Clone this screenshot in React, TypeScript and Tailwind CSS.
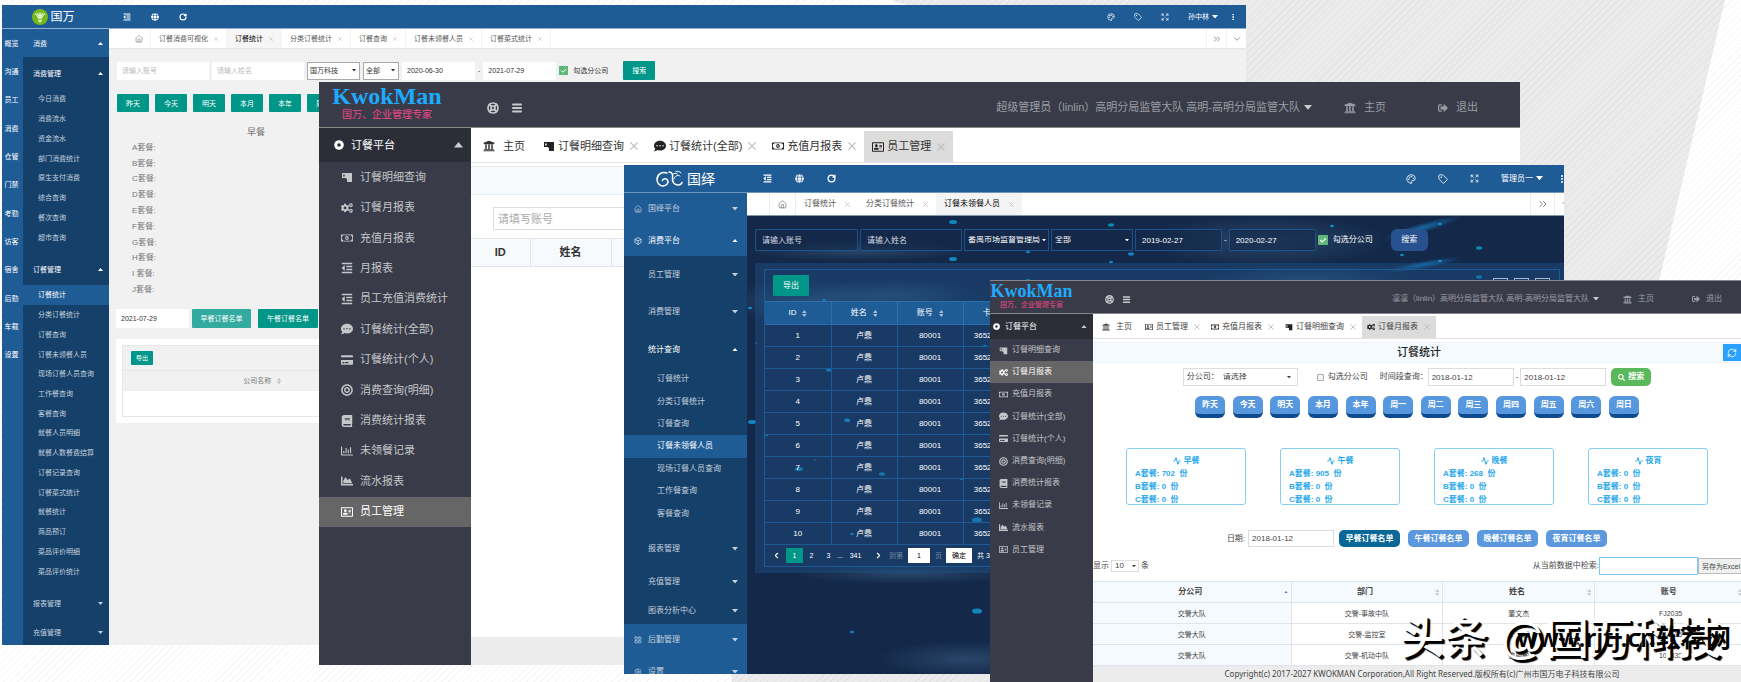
import type { ReactNode } from "react";
import {
  FaBook,
  FaBullseye,
  FaChartArea,
  FaCogs,
  FaCommentDots,
  FaCreditCard,
  FaGlobe,
  FaOutdent,
  FaRegAddressCard,
  FaRegChartBar,
  FaRegMoneyBillAlt,
  FaSearch,
  FaSignOutAlt,
  FaUniversity,
} from "react-icons/fa";
import {
  Activity,
  Box,
  ChevronDown,
  ChevronLeft,
  ChevronRight,
  ChevronsRight,
  Expand,
  House,
  LayoutGrid,
  LifeBuoy,
  Menu,
  MoreVertical,
  Palette,
  RefreshCw,
  RotateCw,
  Settings,
  Tag,
} from "lucide-react";

const railItems = ["概览", "沟通", "员工", "消费", "仓管", "门禁", "考勤", "访客", "宿舍", "后勤", "车载", "设置"];

const spendItems = [
  "今日消费",
  "消费流水",
  "资金流水",
  "部门消费统计",
  "原生支付消费",
  "综合查询",
  "餐次查询",
  "超市查询",
];

const orderItems = [
  "订餐统计",
  "分类订餐统计",
  "订餐查询",
  "订餐未领餐人员",
  "现场订餐人员查询",
  "工作餐查询",
  "客餐查询",
  "就餐人员明细",
  "就餐人数餐费结算",
  "订餐记录查询",
  "订餐菜式统计",
  "就餐统计",
  "商品预订",
  "菜品评价明细",
  "菜品评价统计",
];

const statItems = [
  "订餐统计",
  "分类订餐统计",
  "订餐查询",
  "订餐未领餐人员",
  "现场订餐人员查询",
  "工作餐查询",
  "客餐查询",
];

// ── Shared pieces ────────────────────────────────────────────

function Caret({ up = false, className = "" }: { up?: boolean; className?: string }) {
  return (
    <svg viewBox="0 0 10 6" className={`shrink-0 fill-current ${className}`} aria-hidden="true">
      <path d={up ? "M0 6h10L5 0z" : "M0 0h10L5 6z"} />
    </svg>
  );
}

function Cross({ className }: { className: string }) {
  return (
    <svg viewBox="0 0 10 10" className={`stroke-current ${className}`} strokeWidth={1.4} aria-hidden="true">
      <path d="M0.5 0.5l9 9M9.5 0.5l-9 9" />
    </svg>
  );
}

function SortIcon({ className = "" }: { className?: string }) {
  return (
    <svg viewBox="0 0 8 12" className={`shrink-0 fill-current ${className}`} aria-hidden="true">
      <path d="M0 5h8L4 0zM0 7h8l-4 5z" />
    </svg>
  );
}

function TicketIcon({ className = "" }: { className?: string }) {
  return (
    <svg viewBox="0 0 12 12" className={`shrink-0 ${className}`} aria-hidden="true">
      <path
        fill="currentColor"
        fillRule="evenodd"
        d="M1 2h10v9H6V8L4.500 7H1zM2.200 3.400v2.200h1.500V3.400z"
      />
    </svg>
  );
}

function DotIcon({ className = "" }: { className?: string }) {
  return (
    <svg viewBox="0 0 10 10" className={`shrink-0 ${className}`} aria-hidden="true">
      <circle cx="5" cy="5" r="3.3" fill="none" stroke="#fff" strokeWidth="3" />
    </svg>
  );
}

interface SelectProps {
  label: string;
  options: string[];
  className: string;
  caret?: string;
}

function Select({ label, options, className, caret = "right-1 w-[4px]" }: SelectProps) {
  return (
    <span className="relative flex items-center">
      <select aria-label={label} className={`appearance-none rounded-none outline-none ${className}`}>
        {options.map((o) => (
          <option key={o}>{o}</option>
        ))}
      </select>
      <Caret className={`pointer-events-none absolute ${caret}`} />
    </span>
  );
}

const kwokItems: { icon: ReactNode; text: string }[] = [
  { icon: <TicketIcon className="size-full" />, text: "订餐明细查询" },
  { icon: <FaCogs className="size-full" />, text: "订餐月报表" },
  { icon: <FaRegMoneyBillAlt className="size-full" />, text: "充值月报表" },
  { icon: <FaOutdent className="size-full" />, text: "月报表" },
  { icon: <FaOutdent className="size-full" />, text: "员工充值消费统计" },
  { icon: <FaCommentDots className="size-full" />, text: "订餐统计(全部)" },
  { icon: <FaCreditCard className="size-full" />, text: "订餐统计(个人)" },
  { icon: <FaBullseye className="size-full" />, text: "消费查询(明细)" },
  { icon: <FaBook className="size-full" />, text: "消费统计报表" },
  { icon: <FaRegChartBar className="size-full" />, text: "未领餐记录" },
  { icon: <FaChartArea className="size-full" />, text: "流水报表" },
  { icon: <FaRegAddressCard className="size-full" />, text: "员工管理" },
];

// ── Window 1 ────────────────────────────────────────────

function PlainTab({ text, active = false }: { text: string; active?: boolean }) {
  return (
    <div
      className={`flex items-center gap-[6px] border-r border-[#f2f2f2] px-2 ${
        active ? "bg-[#f6f6f6] text-black" : "text-[#555]"
      }`}
    >
      <a href="#">{text}</a>
      <button aria-label={`关闭${text}`} className="text-[#bbb]">
        <Cross className="size-[4px]" />
      </button>
    </div>
  );
}

function SubItem({ text, active = false, className }: { text: string; active?: boolean; className: string }) {
  return (
    <a
      href="#"
      className={`flex items-center ${className} ${active ? "bg-[#1f5c96] text-white" : "text-[#c3d0dc]"}`}
    >
      {text}
    </a>
  );
}

function TealButton({ text, className = "h-[18px] w-8" }: { text: string; className?: string }) {
  return <button className={`rounded-[1px] bg-[#009688] text-white ${className}`}>{text}</button>;
}

function OverviewWindow() {
  return (
    <section className="absolute top-[5px] right-[495px] bottom-[37px] left-[2px] flex flex-col overflow-hidden bg-[#f1f1f1] text-[7px] text-[#333]">
      <header className="flex h-6 shrink-0 items-center border-b border-[#8fb0d0] bg-[#1f5c96] text-white">
        <div className="flex w-[107px] items-center justify-center gap-[2px] pr-1 text-[12px]">
          <svg viewBox="0 0 30 30" className="size-4" aria-hidden="true">
            <circle cx="15" cy="15" r="15" fill="#76b81b" />
            <path d="M10 10h10l-2.500 8h-5z" fill="#cfe8a6" />
            <path
              d="M5 9c3 1 6 4 7 9M25 9c-3 1-6 4-7 9M15 6v12M9 7l3 5M21 7l-3 5"
              fill="none"
              stroke="#fff"
              strokeWidth="1.8"
            />
            <path d="M11.500 21h7M12.500 24h5" stroke="#fff" strokeWidth="1.8" />
          </svg>
          <span>国万</span>
        </div>
        <div className="flex flex-1 items-center gap-[20px] pl-[14px]">
          <FaOutdent className="size-2" />
          <FaGlobe className="size-2" />
          <RotateCw className="size-2" strokeWidth={3.5} />
        </div>
        <div className="flex items-center gap-[19px] pr-[9px]">
          <Palette className="size-2" />
          <Tag className="size-2" />
          <Expand className="size-2" />
          <span className="-mr-2 flex items-center gap-[3px]">
            孙中林
            <Caret className="w-[6px]" />
          </span>
          <MoreVertical className="size-2" strokeWidth={3} />
        </div>
      </header>

      <div className="flex min-h-0 flex-1">
        <nav className="w-[21px] shrink-0 bg-[#1f5c96] text-white">
          <div className="grid h-[340px] grid-rows-12">
            {railItems.map((t) => (
              <a key={t} href="#" className="flex items-center justify-center pr-[2px]">
                {t}
              </a>
            ))}
          </div>
        </nav>
        <nav className="w-[86px] shrink-0 overflow-hidden bg-[#15406a] text-white">
          <div className="flex h-7 items-center justify-between bg-[#1f5c96] pr-[6px] pl-[10px]">
            消费
            <Caret up className="w-[5px]" />
          </div>
          <div className="flex h-8 items-center justify-between pr-[6px] pl-[10px]">
            消费管理
            <Caret up className="w-[5px]" />
          </div>
          <div className="grid h-[158px] grid-rows-8">
            {spendItems.map((t) => (
              <SubItem key={t} text={t} className="pl-[15px]" />
            ))}
          </div>
          <div className="mt-[6px] flex h-8 items-center justify-between pr-[6px] pl-[10px]">
            订餐管理
            <Caret up className="w-[5px]" />
          </div>
          <div className="grid h-[296px]">
            {orderItems.map((t, i) => (
              <SubItem key={t} text={t} active={i === 0} className="pl-[15px]" />
            ))}
          </div>
          <div className="mt-[6px] flex h-8 items-center justify-between pr-[6px] pl-[10px] text-[#c3d0dc]">
            报表管理
            <Caret className="w-[5px]" />
          </div>
          <div className="flex h-[26px] items-center justify-between pr-[6px] pl-[10px] text-[#c3d0dc]">
            充值管理
            <Caret className="w-[5px]" />
          </div>
        </nav>

        <main className="min-w-0 flex-1">
          <div className="flex h-5 border-b border-[#e6e6e6] bg-white">
            <a href="#" aria-label="首页" className="flex w-[42px] items-center justify-end border-r border-[#f2f2f2] pr-[7px] text-[#666]">
              <House className="size-[8px]" strokeWidth={1.5} />
            </a>
            <PlainTab text="订餐消费可视化" />
            <PlainTab text="订餐统计" active />
            <PlainTab text="分类订餐统计" />
            <PlainTab text="订餐查询" />
            <PlainTab text="订餐未领餐人员" />
            <PlainTab text="订餐菜式统计" />
            <div className="ml-auto flex text-[#555]">
              <button aria-label="更多标签" className="w-5 border-l border-[#f2f2f2] pl-[5px]">
                <ChevronsRight className="size-[10px]" strokeWidth={1.5} />
              </button>
              <button aria-label="标签操作" className="w-5 border-l border-[#f2f2f2] pl-[5px]">
                <ChevronDown className="size-[10px]" strokeWidth={1.5} />
              </button>
            </div>
          </div>

          <div className="flex items-center gap-[3px] px-2 pt-3">
            <input aria-label="账号" placeholder="请输入账号" className="h-[18px] w-[92px] bg-white px-[5px] placeholder:text-[#bbb]" />
            <input aria-label="姓名" placeholder="请输入姓名" className="h-[18px] w-[92px] bg-white px-[5px] placeholder:text-[#bbb]" />
            <Select label="公司" options={["国万科技"]} className="h-[18px] w-[53px] border border-[#aaa] bg-white pl-[2px]" />
            <Select label="部门" options={["全部"]} className="h-[18px] w-9 border border-[#aaa] bg-white pl-[2px]" />
            <input aria-label="开始日期" defaultValue="2020-06-30" className="h-[18px] w-[73px] bg-white px-[5px]" />
            <span>-</span>
            <input aria-label="结束日期" defaultValue="2021-07-29" className="h-[18px] w-[73px] bg-white px-[5px]" />
            <label className="flex items-center gap-[5px]">
              <input type="checkbox" defaultChecked className="peer sr-only" />
              <span className="grid size-[9px] place-items-center bg-[#5fb878]">
                <svg viewBox="0 0 10 10" className="size-[7px] fill-none stroke-white" strokeWidth={1.4}>
                  <path d="M1.5 5l2.5 2.5L8.5 3" />
                </svg>
              </span>
              勾选分公司
            </label>
            <TealButton text="搜索" className="ml-3 h-[19px] w-8" />
          </div>

          <div className="flex gap-[6px] px-2 pt-[14px]">
            {["昨天", "今天", "明天", "本月", "本年", "周一"].map((t) => (
              <TealButton key={t} text={t} />
            ))}
          </div>

          <div className="w-[294px] pt-4 text-[8px] text-[#777]">
            <h2 className="text-center text-[9px]">早餐</h2>
            <ul className="mt-[3px] grid h-[158px] pl-[23px]">
              {["A", "B", "C", "D", "E", "F", "G", "H", "I ", "J"].map((t) => (
                <li key={t} className="flex items-center">
                  {t}套餐:
                </li>
              ))}
            </ul>
          </div>

          <div className="flex gap-[3px] px-[7px] pt-[11px]">
            <input aria-label="日期" defaultValue="2021-07-29" className="h-[19px] w-[73px] bg-white px-[5px]" />
            <button className="h-[19px] w-[59px] rounded-[1px] bg-[#33aa9f] text-white">早餐订餐名单</button>
            <TealButton text="午餐订餐名单" className="ml-1 h-[19px] w-[60px]" />
          </div>

          <div className="mt-[11px] ml-[7px] bg-white p-[6px]">
            <div className="flex h-[25px] items-center border border-b-0 border-[#e6e6e6] bg-[#f1f1f1] pl-2">
              <TealButton text="导出" className="h-[14px] w-[22px] text-[6px]" />
            </div>
            <table className="w-full table-fixed border-collapse border border-[#e6e6e6] text-[#777]">
              <thead>
                <tr className="h-5 bg-[#f1f1f1]">
                  <th className="w-[279px] border-t border-[#e6e6e6] font-normal">
                    <span className="inline-flex items-center gap-[6px]">
                      公司名称
                      <SortIcon className="h-[6px] text-[#bbb]" />
                    </span>
                  </th>
                  <th className="border-t border-[#e6e6e6]" />
                </tr>
              </thead>
              <tbody>
                <tr className="h-[26px]">
                  <td />
                  <td />
                </tr>
              </tbody>
            </table>
          </div>
        </main>
      </div>
    </section>
  );
}

// ── Window 2 ────────────────────────────────────────────

function KwokTab({ icon, text, active = false }: { icon: ReactNode; text: string; active?: boolean }) {
  return (
    <div className={`flex items-center gap-[3px] px-2 ${active ? "mt-[3px] bg-[#dcdcdc]" : "pt-[2px]"}`}>
      <span className="size-3 text-[#222]">{icon}</span>
      <a href="#">{text}</a>
      <button aria-label={`关闭${text}`} className="ml-[3px] text-[#bbb]">
        <Cross className="size-2" />
      </button>
    </div>
  );
}

function StaffWindow() {
  return (
    <section className="absolute top-[82px] right-[221px] bottom-[17px] left-[319px] flex flex-col overflow-hidden bg-white text-[11px] text-[#333]">
      <header className="flex h-[46px] shrink-0 items-center border-b border-[#8a8a8a] bg-[#393c48] text-[#9b9da4]">
        <div className="flex w-[152px] flex-col items-center self-start pr-4">
          <span className="font-[family-name:'Liberation_Serif',serif] text-[24px] leading-7 font-bold text-[#1eaaff]">
            KwokMan
          </span>
          <span className="text-[10px] font-medium text-[#d6457c]">国万、企业管理专家</span>
        </div>
        <div className="flex flex-1 items-center gap-3 pt-[6px] pl-4 text-[#c9cacd]">
          <LifeBuoy className="size-3" strokeWidth={3.4} />
          <Menu className="size-3" strokeWidth={4} />
        </div>
        <div className="flex items-center pt-[6px] pr-[42px]">
          <span>超级管理员（linlin）高明分局监管大队 高明-高明分局监管大队</span>
          <Caret className="ml-1 w-2 text-[#ccc]" />
          <FaUniversity className="ml-[32px] size-3" />
          <a href="#" className="ml-2">
            主页
          </a>
          <FaSignOutAlt className="ml-[52px] size-[10px]" />
          <a href="#" className="ml-2">
            退出
          </a>
        </div>
      </header>

      <div className="flex min-h-0 flex-1">
        <nav className="w-[152px] shrink-0 bg-[#393c48] text-[#c5c6ca]">
          <div className="flex h-[34px] items-center bg-[#2b2e37] pr-2 pl-[15px] text-white">
            <DotIcon className="size-[10px]" />
            <span className="ml-[7px] flex-1">订餐平台</span>
            <Caret up className="w-[9px] text-[#ccc]" />
          </div>
          <div className="grid h-[365px] grid-rows-12">
            {kwokItems.map(({ icon, text }) => (
              <a
                key={text}
                href="#"
                className={`flex items-center gap-[7px] pl-[22px] ${
                  text === "员工管理" ? "bg-[#666] text-white" : ""
                }`}
              >
                <span className="size-3">{icon}</span>
                {text}
              </a>
            ))}
          </div>
        </nav>
        <main className="flex min-w-0 flex-1 flex-col">
          <div className="flex h-[35px] shrink-0 border-b border-[#e4e4e4]">
            <a href="#" className="flex items-center gap-2 pt-[2px] pr-[10px] pl-3">
              <FaUniversity className="size-3" />
              主页
            </a>
            <KwokTab icon={<TicketIcon className="size-full" />} text="订餐明细查询" />
            <KwokTab icon={<FaCommentDots className="size-full" />} text="订餐统计(全部)" />
            <KwokTab icon={<FaRegMoneyBillAlt className="size-full" />} text="充值月报表" />
            <KwokTab icon={<FaRegAddressCard className="size-full" />} text="员工管理" active />
          </div>
          <div className="mt-[3px] h-[29px] shrink-0 border-y border-[#e8edf2] bg-[#f6fafd]" />
          <div className="shrink-0 pt-3 pl-[22px]">
            <input aria-label="账号" placeholder="请填写账号" className="h-[23px] w-[220px] border border-[#ddd] px-1 placeholder:text-[#aaa]" />
          </div>
          <table className="mt-2 w-full shrink-0 table-fixed border-collapse">
            <thead>
              <tr className="h-7 border-y border-[#e2e6ea] bg-[#f6fafd]">
                <th className="w-[59px]">ID</th>
                <th className="w-[81px] border-x border-[#e2e6ea]">姓名</th>
                <th />
              </tr>
            </thead>
          </table>
          <footer className="mt-auto h-7 bg-[#ececec]" />
        </main>
      </div>
    </section>
  );
}

// ── Window 3 ────────────────────────────────────────────

// x, y and horizontal radius of the glowing specks behind the panels
const specks = [
  [206, 28, 4], [206, 65, 4], [77, 106, 2], [3, 114, 2], [9, 149, 1], [82, 176, 3], [238, 152, 2],
  [100, 226, 3], [5, 228, 4], [101, 227, 2], [19, 241, 2], [68, 266, 1], [52, 275, 4], [135, 280, 3],
  [215, 285, 2], [230, 326, 5], [105, 340, 2], [230, 417, 5], [105, 438, 2], [364, 31, 3], [585, 32, 2],
  [693, 30, 2], [281, 58, 2], [384, 60, 3], [364, 68, 2], [732, 54, 3], [655, 61, 2], [693, 67, 2],
  [732, 83, 3], [281, 86, 2],
];

function Sky() {
  return (
    <svg className="absolute inset-0 size-full" aria-hidden="true">
      <defs>
        <radialGradient id="cloud">
          <stop offset="0" stopColor="#4d7ba3" stopOpacity="0.35" />
          <stop offset="1" stopColor="#4d7ba3" stopOpacity="0" />
        </radialGradient>
        <radialGradient id="beam">
          <stop offset="0" stopColor="#1b86cf" stopOpacity="0.7" />
          <stop offset="1" stopColor="#1b86cf" stopOpacity="0" />
        </radialGradient>
      </defs>
      <ellipse cx="110" cy="35" rx="110" ry="10" fill="url(#cloud)" />
      <ellipse cx="60" cy="85" rx="90" ry="22" fill="url(#cloud)" />
      <ellipse cx="150" cy="80" rx="90" ry="18" fill="url(#cloud)" />
      <ellipse cx="520" cy="25" rx="120" ry="26" fill="url(#cloud)" />
      <ellipse cx="560" cy="64" rx="110" ry="16" fill="url(#cloud)" />
      <ellipse cx="160" cy="358" rx="110" ry="10" fill="url(#cloud)" />
      <ellipse cx="220" cy="443" rx="90" ry="18" fill="url(#cloud)" />
      <ellipse cx="675" cy="12" rx="40" ry="5" fill="url(#beam)" transform="rotate(-16 675 12)" />
      <ellipse cx="675" cy="49" rx="40" ry="4" fill="url(#beam)" transform="rotate(-10 675 49)" />
      {specks.map(([x, y, r], i) => (
        <ellipse key={i} cx={x} cy={y - 22} rx={r} ry={r * 0.45 + 0.3} fill="#1295d4" opacity="0.85" />
      ))}
    </svg>
  );
}

function GroupRow({ text, up = false, icon, className }: { text: string; up?: boolean; icon?: ReactNode; className: string }) {
  return (
    <div className={`flex items-center pr-[9px] pl-[10px] ${up ? "text-white" : "text-[#c3d0dc]"} ${className}`}>
      <span className="mr-[6px] size-2">{icon}</span>
      <span className="flex-1">{text}</span>
      <Caret up={up} className="w-[6px]" />
    </div>
  );
}

function AbsenceWindow() {
  return (
    <section className="absolute top-[165px] right-[177px] bottom-2 left-[624px] flex flex-col overflow-hidden bg-[#14294a] text-[8px] text-white">
      <header className="flex h-[28px] shrink-0 items-center border-b border-[#6f96bb] bg-[#1f5c96]">
        <div className="flex w-[123px] items-center justify-center gap-1 text-[14px]">
          <svg viewBox="0 0 54 34" className="h-[17px] w-[27px] fill-none stroke-white" strokeWidth="3" strokeLinecap="round" aria-hidden="true">
            <path d="M22 6C12 2 2 9 2 19c0 8 6 13 12 13 8 0 12-7 9-12-3-4-9-3-10 1" />
            <path d="M26 4c6 0 8 5 7 11-1 9 3 15 11 15 4 0 7-2 8-5" />
            <path d="M48 12c-5-3-11 0-12 6M40 3c4-1 7 0 10 3M33 9c3-3 7-3 10-1" strokeWidth="2" />
          </svg>
          <span>国绎</span>
        </div>
        <div className="flex flex-1 items-center gap-[23px] pl-4">
          <FaOutdent className="size-[9px]" />
          <FaGlobe className="size-[9px]" />
          <RotateCw className="size-[9px]" strokeWidth={3.5} />
        </div>
        <div className="flex items-center gap-[22px]">
          <Palette className="size-[10px]" />
          <Tag className="size-[10px]" />
          <Expand className="size-[9px]" />
          <span className="flex items-center gap-[3px]">
            管理员一
            <Caret className="w-[7px]" />
          </span>
          <MoreVertical className="-mr-[3px] -ml-2 size-[10px]" strokeWidth={3} />
        </div>
      </header>

      <div className="flex min-h-0 flex-1">
        <nav className="w-[123px] shrink-0 overflow-hidden bg-[#1f5c96]">
          <GroupRow text="国绎平台" icon={<House className="size-2" />} className="h-8" />
          <GroupRow text="消费平台" icon={<Box className="size-2" />} up className="h-[31px]" />
          <div className="h-[368px] bg-[#15406a]">
            <GroupRow text="员工管理" className="h-[37px]" />
            <GroupRow text="消费管理" className="h-[38px]" />
            <GroupRow text="统计查询" up className="h-[37px]" />
            <div className="grid h-[157px] grid-rows-7">
              {statItems.map((t) => (
                <SubItem key={t} text={t} active={t === "订餐未领餐人员"} className="pl-[33px]" />
              ))}
            </div>
            <GroupRow text="报表管理" className="mt-[7px] h-[34px]" />
            <GroupRow text="充值管理" className="h-8" />
            <GroupRow text="图表分析中心" className="h-[26px]" />
          </div>
          <GroupRow text="后勤管理" icon={<LayoutGrid className="size-2" />} className="h-8" />
          <GroupRow text="设置" icon={<Settings className="size-2" />} className="h-[31px]" />
        </nav>

        <main className="flex min-w-0 flex-1 flex-col">
          <div className="flex h-[22px] shrink-0 bg-white text-[#555]">
            <a href="#" aria-label="首页" className="ml-[22px] flex w-[27px] items-center justify-center border-x border-[#eee]">
              <House className="size-[9px]" strokeWidth={1.5} />
            </a>
            {["订餐统计", "分类订餐统计", "订餐未领餐人员"].map((t, i) => (
              <div key={t} className={`flex items-center gap-[9px] px-2 ${i === 2 ? "bg-[#f4f4f4] text-black" : ""}`}>
                <a href="#">{t}</a>
                <button aria-label={`关闭${t}`} className="text-[#bbb]">
                  <Cross className="size-[5px]" />
                </button>
              </div>
            ))}
            <div className="-mr-[14px] ml-auto flex">
              <button aria-label="更多标签" className="w-6 border-l border-[#eee] pl-[6px]">
                <ChevronsRight className="size-3" strokeWidth={1.5} />
              </button>
              <button aria-label="标签操作" className="w-6 border-l border-[#eee] pl-[5px]">
                <ChevronDown className="size-3" strokeWidth={1.5} />
              </button>
            </div>
          </div>

          <div className="relative min-h-0 flex-1 border-t border-[#8397ad]">
            <Sky />
            <div className="relative flex items-center gap-[2px] px-2 pt-[13px]">
              <input aria-label="账号" placeholder="请输入账号" className="h-[22px] w-[103px] rounded-[1px] border border-[#1e5288] bg-[#14294a]/60 px-[6px] placeholder:text-[#d5dae2]" />
              <input aria-label="姓名" placeholder="请输入姓名" className="h-[22px] w-[102px] rounded-[1px] border border-[#1e5288] bg-[#14294a]/60 px-[6px] placeholder:text-[#d5dae2]" />
              <Select label="公司" options={["番禺市场监督管理局"]} className="h-[22px] w-[85px] border border-[#1e5288] bg-[#14294a] pl-[3px]" caret="right-[3px] w-[4px]" />
              <Select label="部门" options={["全部"]} className="h-[22px] w-[82px] border border-[#1e5288] bg-[#14294a] pl-[3px]" caret="right-1 w-[4px]" />
              <input aria-label="开始日期" defaultValue="2019-02-27" className="h-[22px] w-[87px] rounded-[1px] border border-[#1e5288] bg-[#14294a]/60 px-[6px]" />
              <span>-</span>
              <input aria-label="结束日期" defaultValue="2020-02-27" className="h-[22px] w-[87px] rounded-[1px] border border-[#1e5288] bg-[#14294a]/60 px-[6px]" />
              <label className="flex items-center gap-[5px]">
                <input type="checkbox" defaultChecked className="peer sr-only" />
                <span className="grid size-[10px] place-items-center bg-[#5fb878]">
                  <svg viewBox="0 0 10 10" className="size-2 fill-none stroke-white" strokeWidth={1.4}>
                    <path d="M1.5 5l2.5 2.5L8.5 3" />
                  </svg>
                </span>
                勾选分公司
              </label>
              <button className="ml-4 h-[22px] w-[37px] rounded-md bg-[#27528f]">搜索</button>
            </div>

            <div className="relative mt-3 ml-2 bg-[#1f5c96]/35 py-[6px] pr-1 pl-[9px]">
              <div className="border border-[#1e5a96]">
                <div className="flex h-[31px] items-center justify-between pr-[9px] pl-2">
                  <TealButton text="导出" className="h-[21px] w-9" />
                  <div className="flex gap-[6px]">
                    <button aria-label="筛选列" className="size-[15px] border border-[#a8b6c6]" />
                    <button aria-label="导出表格" className="size-[15px] border border-[#a8b6c6]" />
                    <button aria-label="打印" className="size-[15px] border border-[#a8b6c6]" />
                  </div>
                </div>
                <table className="w-full table-fixed border-collapse text-center">
                  <thead>
                    <tr className="h-[23px] bg-[#1f5c96]">
                      {["ID", "姓名", "账号", "卡号"].map((t) => (
                        <th key={t} className="w-[66px] border border-l-0 border-[#2a6fb0] font-normal">
                          <span className="inline-flex items-center gap-[6px]">
                            {t}
                            <SortIcon className="h-[7px] text-[#a9bdd2]" />
                          </span>
                        </th>
                      ))}
                      <th />
                    </tr>
                  </thead>
                  <tbody>
                    {Array.from({ length: 10 }, (_, i) => (
                      <tr key={i} className="h-[22px] border-b border-[#1e5a96]">
                        <td className="border-r border-[#1e5a96]">{i + 1}</td>
                        <td className="border-r border-[#1e5a96]">卢鼎</td>
                        <td className="border-r border-[#1e5a96]">80001</td>
                        <td className="border-r border-[#1e5a96]">3652100001</td>
                        <td />
                      </tr>
                    ))}
                  </tbody>
                </table>
                <div className="flex h-[21px] items-center pl-[7px] text-[7px]">
                  <button aria-label="上一页">
                    <ChevronLeft className="size-[9px]" strokeWidth={3} />
                  </button>
                  <button className="ml-[5px] h-[15px] w-[17px] bg-[#009688]">1</button>
                  <button className="w-[17px]">2</button>
                  <button className="w-[17px]">3</button>
                  <span className="w-2">...</span>
                  <button className="ml-1 w-[13px]">341</button>
                  <button aria-label="下一页" className="ml-3">
                    <ChevronRight className="size-[9px]" strokeWidth={3} />
                  </button>
                  <label className="ml-[6px] flex items-center gap-[5px] text-[#71879f]">
                    到第
                    <input defaultValue="1" className="h-[15px] w-[22px] bg-white text-center text-black" />
                    页
                  </label>
                  <button className="ml-1 h-[15px] w-[26px] bg-white text-black">确定</button>
                  <span className="ml-[5px]">共 3405 条</span>
                </div>
              </div>
            </div>
          </div>
        </main>
      </div>
    </section>
  );
}

// ── Window 4 ────────────────────────────────────────────

const meals = [
  { name: "早餐", a: 702 },
  { name: "午餐", a: 905 },
  { name: "晚餐", a: 268 },
  { name: "夜宵", a: 0 },
];

const rows = [
  ["交警大队", "交警-事故中队", "董文杰", "FJ2035"],
  ["交警大队", "交警-监控室", "李国强", "FJ2135"],
  ["交警大队", "交警-机动中队", "曾艳敏", "103835"],
];

function SmallTab({ icon, text, active = false }: { icon: ReactNode; text: string; active?: boolean }) {
  return (
    <div className={`flex items-center gap-[3px] pr-[6px] pl-[5px] ${active ? "mt-[2px] bg-[#dcdcdc]" : "pt-[2px]"}`}>
      <span className="size-2 text-[#222]">{icon}</span>
      <a href="#">{text}</a>
      <button aria-label={`关闭${text}`} className="ml-[3px] text-[#bbb]">
        <Cross className="size-[6px]" />
      </button>
    </div>
  );
}

function MonthlyWindow() {
  return (
    <section className="absolute top-[280px] right-0 bottom-0 left-[990px] flex flex-col overflow-hidden bg-white text-[8px] text-[#444]">
      <header className="flex h-[34px] shrink-0 items-center border-y border-[#85868b] bg-[#393c48] text-[#9b9da4]">
        <div className="flex w-[103px] flex-col items-center self-start pr-5">
          <span className="font-[family-name:'Liberation_Serif',serif] text-[18px] leading-5 font-bold text-[#1eaaff]">
            KwokMan
          </span>
          <span className="text-[7px] font-medium text-[#d6457c]">国万、企业管理专家</span>
        </div>
        <div className="flex flex-1 items-center gap-2 pt-1 pl-3 text-[#c9cacd]">
          <LifeBuoy className="size-[9px]" strokeWidth={3.4} />
          <Menu className="size-[9px]" strokeWidth={4} />
        </div>
        <div className="flex items-center pt-1 pr-[19px]">
          <span>凛凛（linlin）高明分局监管大队 高明-高明分局监管大队</span>
          <Caret className="ml-1 w-[6px] text-[#ccc]" />
          <FaUniversity className="ml-6 size-[9px]" />
          <a href="#" className="ml-[6px]">
            主页
          </a>
          <FaSignOutAlt className="ml-[38px] size-2" />
          <a href="#" className="ml-[6px]">
            退出
          </a>
        </div>
      </header>

      <div className="flex min-h-0 flex-1">
        <nav className="w-[103px] shrink-0 bg-[#393c48] text-[#c5c6ca]">
          <div className="flex h-[25px] items-center bg-[#2b2e37] pr-[6px] pl-[3px] text-white">
            <DotIcon className="size-[7px]" />
            <span className="ml-[5px] flex-1">订餐平台</span>
            <Caret up className="w-[6px] text-[#ccc]" />
          </div>
          <div className="grid h-[222px] grid-rows-10">
            {kwokItems
              .filter((_, i) => i !== 3 && i !== 4)
              .map(({ icon, text }) => (
                <a
                  key={text}
                  href="#"
                  className={`flex items-center gap-1 pl-[9px] ${
                    text === "订餐月报表" ? "bg-[#666] text-white" : ""
                  }`}
                >
                  <span className="size-[9px]">{icon}</span>
                  {text}
                </a>
              ))}
          </div>
        </nav>

        <main className="flex min-w-0 flex-1 flex-col">
          <div className="flex h-[25px] shrink-0 border-b border-[#e4e4e4]">
            <a href="#" className="flex items-center gap-[6px] pt-[2px] pr-2 pl-[9px]">
              <FaUniversity className="size-2" />
              主页
            </a>
            <SmallTab icon={<FaRegAddressCard className="size-full" />} text="员工管理" />
            <SmallTab icon={<FaRegMoneyBillAlt className="size-full" />} text="充值月报表" />
            <SmallTab icon={<TicketIcon className="size-full" />} text="订餐明细查询" />
            <SmallTab icon={<FaCogs className="size-full" />} text="订餐月报表" active />
          </div>
          <div className="mt-[3px] flex h-[21px] shrink-0 items-center border-y border-[#edf3f8] bg-[#f5faff]">
            <h1 className="flex-1 pl-[22px] text-center text-[11px] font-medium text-[#222]">订餐统计</h1>
            <button aria-label="刷新" className="grid h-[17px] w-[18px] place-items-center bg-[#2aa0ff] text-white">
              <RefreshCw className="size-[10px]" />
            </button>
          </div>

          <div className="flex shrink-0 items-center justify-center pt-[5px]">
            <label className="flex h-[18px] items-center border border-[#ddd] pl-[3px]">
              分公司：
              <Select label="分公司" options={["请选择"]} className="h-4 w-[78px] pl-[4px]" caret="right-[6px] w-[4px]" />
            </label>
            <label className="ml-[19px] flex items-center gap-1">
              <input type="checkbox" className="size-[7px] appearance-none rounded-[1px] border border-[#aaa] bg-[#f4f4f4]" />
              勾选分公司
            </label>
            <label className="ml-3 flex items-center">
              时间段查询：
              <input defaultValue="2018-01-12" className="h-[18px] w-[86px] border border-[#ddd] px-[3px]" />
            </label>
            <span className="px-[2px]">-</span>
            <input aria-label="结束日期" defaultValue="2018-01-12" className="h-[18px] w-[86px] border border-[#ddd] px-[3px]" />
            <button className="ml-[5px] flex h-[18px] w-10 items-center justify-center gap-[3px] rounded-[5px] bg-[#5cb85c] font-bold text-white">
              <FaSearch className="size-[7px]" />
              搜索
            </button>
          </div>

          <div className="flex w-[444px] shrink-0 justify-between self-center pt-[10px]">
            {["昨天", "今天", "明天", "本月", "本年", "周一", "周二", "周三", "周四", "周五", "周六", "周日"].map((t) => (
              <button key={t} className="h-[22px] w-[30px] rounded-[6px] border-b-4 border-[#0d4a8f] bg-[#5797de] font-bold text-white">
                {t}
              </button>
            ))}
          </div>

          <div className="grid shrink-0 grid-cols-4 gap-[34px] px-[33px] pt-[30px] font-bold text-[#2ba9ec]">
            {meals.map(({ name, a }) => (
              <section key={name} className="h-[57px] overflow-hidden rounded-[3px] border border-[#86d0f8] px-2 pt-[5px]">
                <h2 className="flex h-[13px] items-center justify-center gap-[3px]">
                  <Activity className="size-2" strokeWidth={3} />
                  {name}
                </h2>
                {["A", "B", "C"].map((k) => (
                  <p key={k} className="h-[13px] leading-[13px] whitespace-pre">
                    {`${k}套餐: ${k === "A" ? a : 0}  份`}
                  </p>
                ))}
              </section>
            ))}
          </div>

          <div className="flex shrink-0 items-center justify-center gap-2 pt-[25px]">
            <label className="flex items-center gap-[3px]">
              日期:
              <input defaultValue="2018-01-12" className="h-[17px] w-[86px] border border-[#ddd] px-[3px]" />
            </label>
            {["早餐订餐名单", "午餐订餐名单", "晚餐订餐名单", "夜宵订餐名单"].map((t, i) => (
              <button
                key={t}
                className={`h-[17px] w-[61px] rounded-[5px] font-bold text-white ${
                  i === 0 ? "-ml-[3px] bg-[#0a6898]" : "bg-[#5b98de]"
                }`}
              >
                {t}
              </button>
            ))}
          </div>

          <div className="flex shrink-0 items-center justify-between pt-[10px]">
            <label className="flex items-center gap-[2px]">
              显示
              <Select label="每页条数" options={["10"]} className="h-3 w-7 border border-[#ddd] pl-[3px]" caret="right-[3px] w-[4px]" />
              条
            </label>
            <div className="-mr-[3px] flex items-center">
              <label className="flex items-center">
                从当前数据中检索:
                <input className="h-[18px] w-[99px] border border-[#7cc9f5]" />
              </label>
              <button className="h-4 w-[46px] border border-[#bbb] bg-[#f0f0f0] text-[7px] whitespace-nowrap">另存为Excel</button>
            </div>
          </div>

          <table className="mt-[6px] w-[calc(100%+6px)] table-fixed border-collapse text-center text-[7px]">
            <thead>
              <tr className="h-[21px] border-y border-[#dfe5ea] bg-[#f5fafe] text-[8px]">
                {["分公司", "部门", "姓名", "账号"].map((t, i) => (
                  <th key={t} className={`border-r border-[#dfe5ea] ${i === 0 ? "w-[198px]" : ""}`}>
                    <span className="flex items-center pr-[3px]">
                      <span className="flex-1 pl-1">{t}</span>
                      {i === 0 ? (
                        <Caret up className="w-[4px] text-[#6b6bd6]" />
                      ) : (
                        <SortIcon className="h-[7px] text-[#ccc]" />
                      )}
                    </span>
                  </th>
                ))}
              </tr>
            </thead>
            <tbody>
              {rows.map((r) => (
                <tr key={r[2]} className="h-[21px] border-b border-[#dfe5ea]">
                  {r.map((c, i) => (
                    <td key={c} className={`border-r border-[#dfe5ea] ${i === 0 ? "bg-[#f5fafe]" : ""}`}>
                      {c}
                    </td>
                  ))}
                </tr>
              ))}
            </tbody>
          </table>

          <footer className="relative mt-auto flex h-5 shrink-0 items-start justify-center bg-[#ececec] pt-1 pl-[10px] font-[family-name:'Noto_Sans','Noto_Sans_CJK_SC',sans-serif] whitespace-nowrap">
            Copyright(c) 2017-2027 KWOKMAN Corporation,All Right Reserved.版权所有(c)广州市国万电子科技有限公司
          </footer>
        </main>
      </div>
    </section>
  );
}

export default function App() {
  return (
    <div className="relative h-screen min-h-[680px] overflow-hidden bg-white font-[family-name:'Liberation_Sans','Noto_Sans_CJK_SC',sans-serif] leading-none whitespace-nowrap">
      <div className="absolute inset-0 bg-[#ebebeb] [clip-path:polygon(890px_0,calc(100%_-_16px)_0,calc(100%_-_176px)_100%,732px_100%,700px_60%,908px_5px)]" />
      <div className="absolute inset-0 bg-[repeating-linear-gradient(135deg,transparent_0_4px,rgba(0,0,0,0.035)_4px_5px)]" />
      <OverviewWindow />
      <StaffWindow />
      <AbsenceWindow />
      <MonthlyWindow />
      <p className="absolute right-5 bottom-[21px] text-[44px] font-medium text-white [text-shadow:2px_2px_0_#000,3px_3px_1px_#000]">
        头条 @国万科技
      </p>
      <p className="absolute right-[10px] bottom-[32px] font-[family-name:'Noto_Sans','Noto_Sans_CJK_SC',sans-serif] text-[25px] font-semibold text-black">
        www.rjtj.cn软荐网
      </p>
    </div>
  );
}
